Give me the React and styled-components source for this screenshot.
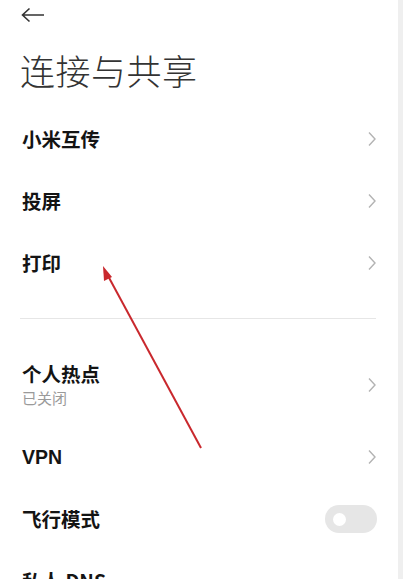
import React from "react";
import styled, { createGlobalStyle } from "styled-components";

const GlobalStyle = createGlobalStyle`
  html, body {
    margin: 0;
    padding: 0;
    background: #fff;
    overflow: hidden;
  }
  body {
    font-family: "Noto Sans CJK SC", "Noto Sans", sans-serif;
    color: #111;
  }
`;

const Page = styled.div`
  position: relative;
  width: 409px;
  height: 579px;
  overflow: hidden;
  background: #fff;
`;

const Header = styled.div`
  padding: 2px 22px 0 21px;
`;

const BackButton = styled.div`
  width: 26px;
  height: 26px;
  display: flex;
  align-items: center;
  color: #333;
`;

const Title = styled.h1`
  margin: 18px 0 0 -1px;
  font-size: 35px;
  line-height: 48px;
  font-weight: 300;
  color: #333;
  letter-spacing: 0.5px;
`;

const List = styled.div`
  margin-top: 14px;
  padding: 0 33px 0 22px;
`;

const Row = styled.div`
  height: ${(p) => p.$h || 62}px;
  display: flex;
  align-items: center;
  justify-content: space-between;
`;

const Texts = styled.div`
  display: flex;
  flex-direction: column;
`;

const Label = styled.div`
  font-size: 19.5px;
  line-height: 24px;
  font-weight: 700;
  color: #141414;
  font-family: ${(p) => (p.$latin ? '"Liberation Sans", "Noto Sans CJK SC", sans-serif' : "inherit")};
`;

const Sub = styled.div`
  margin-top: 1px;
  font-size: 15px;
  line-height: 22px;
  color: #9a9a9a;
`;

const Divider = styled.div`
  height: 1px;
  background: #e6e6e6;
  margin: 24px 0 25px -2px;
`;

const Toggle = styled.div`
  width: 52px;
  height: 28px;
  border-radius: 14px;
  background: #e6e6e6;
  display: flex;
  align-items: center;
  padding-left: 8px;
  box-sizing: border-box;
  margin-right: -1px;
`;

const Knob = styled.div`
  width: 13px;
  height: 13px;
  border-radius: 50%;
  background: #fff;
`;

const ScrollTrack = styled.div`
  position: absolute;
  top: 0;
  right: 6px;
  width: 5px;
  height: 100%;
  background: #efefef;
`;

const Annotation = styled.svg`
  position: absolute;
  left: 0;
  top: 0;
  pointer-events: none;
`;

const Chevron = () => (
  <svg width="10" height="16" viewBox="0 0 10 16" style={{ marginRight: -1 }}>
    <path d="M2 1.5 L8 8 L2 14.5" fill="none" stroke="#b3b3b3" strokeWidth="1.4" />
  </svg>
);

const items = [
  { label: "小米互传" },
  { label: "投屏" },
  { label: "打印" },
];

export default function App() {
  return (
    <>
      <GlobalStyle />
      <Page>
        <Header>
          <BackButton>
            <svg width="24" height="16" viewBox="0 0 24 16">
              <path d="M1.5 8 H23 M8.5 1.5 L1.5 8 L8.5 14.5" fill="none" stroke="#333" strokeWidth="1.6" />
            </svg>
          </BackButton>
          <Title>连接与共享</Title>
        </Header>
        <List>
          {items.map((it) => (
            <Row key={it.label}>
              <Label>{it.label}</Label>
              <Chevron />
            </Row>
          ))}
          <Divider />
          <Row $h={82}>
            <Texts>
              <Label>个人热点</Label>
              <Sub>已关闭</Sub>
            </Texts>
            <Chevron />
          </Row>
          <Row>
            <Label $latin>VPN</Label>
            <Chevron />
          </Row>
          <Row>
            <Label>飞行模式</Label>
            <Toggle>
              <Knob />
            </Toggle>
          </Row>
          <Row>
            <Label>私人 DNS</Label>
          </Row>
        </List>
        <ScrollTrack />
        <Annotation width="409" height="579" viewBox="0 0 409 579">
          <line x1="201" y1="448" x2="107" y2="274" stroke="#c9282d" strokeWidth="2" />
          <path d="M103 266 L112 277 L104 281 Z" fill="#c9282d" />
        </Annotation>
      </Page>
    </>
  );
}
